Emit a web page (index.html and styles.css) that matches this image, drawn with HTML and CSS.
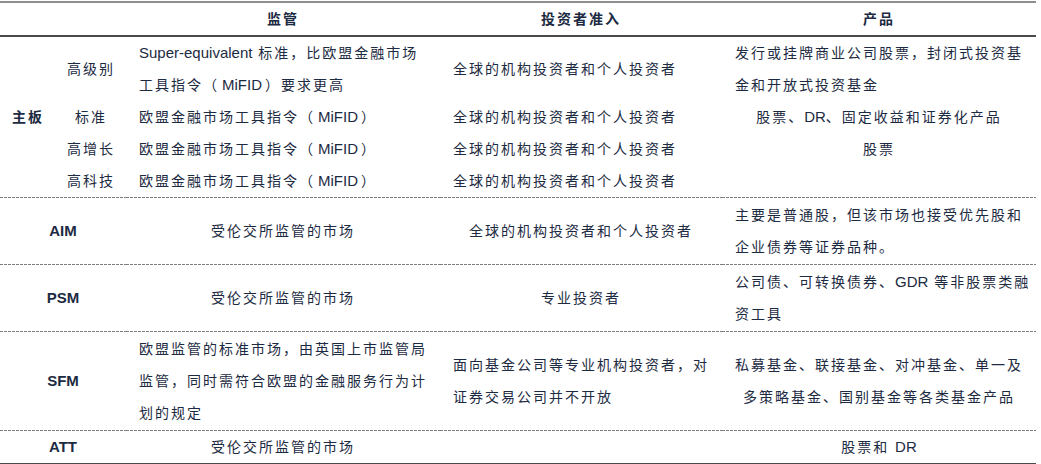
FILE: index.html
```html
<!DOCTYPE html>
<html lang="zh-CN">
<head>
<meta charset="utf-8">
<link rel="stylesheet" href="styles.css">
</head>
<body>
<table class="tbl">
  <colgroup>
    <col class="c1"><col class="c2"><col class="c3"><col class="c4"><col class="c5">
  </colgroup>
  <thead>
    <tr>
      <th colspan="2"></th>
      <th>监管</th>
      <th>投资者准入</th>
      <th>产品</th>
    </tr>
  </thead>
  <tbody>
    <tr class="sub">
      <td rowspan="4" class="group bold">主板</td>
      <td class="ctr">高级别</td>
      <td><span class="lat">Super-equivalent</span> 标准，比欧盟金融市场<br>工具指令（<span class="lat par">MiFID</span>）要求更高</td>
      <td>全球的机构投资者和个人投资者</td>
      <td>发行或挂牌商业公司股票，封闭式投资基<br>金和开放式投资基金</td>
    </tr>
    <tr class="sub">
      <td class="ctr">标准</td>
      <td>欧盟金融市场工具指令（<span class="lat par">MiFID</span>）</td>
      <td>全球的机构投资者和个人投资者</td>
      <td class="ctr">股票、<span class="lat">DR</span>、固定收益和证券化产品</td>
    </tr>
    <tr class="sub">
      <td class="ctr">高增长</td>
      <td>欧盟金融市场工具指令（<span class="lat par">MiFID</span>）</td>
      <td>全球的机构投资者和个人投资者</td>
      <td class="ctr">股票</td>
    </tr>
    <tr class="sub last">
      <td class="ctr">高科技</td>
      <td>欧盟金融市场工具指令（<span class="lat par">MiFID</span>）</td>
      <td>全球的机构投资者和个人投资者</td>
      <td></td>
    </tr>
    <tr class="grp">
      <td colspan="2" class="ctr lat bold">AIM</td>
      <td class="ctr">受伦交所监管的市场</td>
      <td class="ctr">全球的机构投资者和个人投资者</td>
      <td>主要是普通股，但该市场也接受优先股和<br>企业债券等证券品种。</td>
    </tr>
    <tr class="grp">
      <td colspan="2" class="ctr lat bold">PSM</td>
      <td class="ctr">受伦交所监管的市场</td>
      <td class="ctr">专业投资者</td>
      <td>公司债、可转换债券、<span class="lat">GDR</span> 等非股票类融<br>资工具</td>
    </tr>
    <tr class="grp">
      <td colspan="2" class="ctr lat bold">SFM</td>
      <td>欧盟监管的标准市场，由英国上市监管局<br>监管，同时需符合欧盟的金融服务行为计<br>划的规定</td>
      <td>面向基金公司等专业机构投资者，对<br>证券交易公司并不开放</td>
      <td class="ctr">私募基金、联接基金、对冲基金、单一及<br>多策略基金、国别基金等各类基金产品</td>
    </tr>
    <tr class="grp end">
      <td colspan="2" class="ctr lat bold">ATT</td>
      <td class="ctr">受伦交所监管的市场</td>
      <td></td>
      <td class="ctr">股票和 <span class="lat">DR</span></td>
    </tr>
  </tbody>
</table>
</body>
</html>
```

FILE: styles.css
```css
html, body {
  margin: 0;
  padding: 0;
  background: #ffffff;
}
body {
  font-family: "Liberation Sans", "Noto Sans CJK SC", sans-serif;
  color: #1c2a42;
}
.tbl {
  margin-top: 1px;
  width: 1036px;
  table-layout: fixed;
  border-collapse: collapse;
  border-top: 2px solid #8f8f8f;
  border-bottom: 2px solid #4a4a4a;
  font-size: 14px;
  letter-spacing: 2px;
}
.c1 { width: 56px; }
.c2 { width: 70px; }
.c3 { width: 314px; }
.c4 { width: 282px; }
.c5 { width: 314px; }
th {
  height: 32px;
  padding: 0;
  font-weight: 700;
  text-align: center;
  vertical-align: middle;
  border-bottom: 2px solid #4a4a4a;
  line-height: 20px;
}
td {
  padding: 0 12px 0 13px;
  line-height: 32px;
  vertical-align: middle;
  text-align: left;
  white-space: nowrap;
}
.sub td { padding-top: 0; padding-bottom: 0; }
.grp td {
  padding-top: 2px;
  padding-bottom: 1px;
  background-image: repeating-linear-gradient(90deg, #7d7d7d 0 3px, transparent 3px 4px);
  background-size: 100% 1px;
  background-position: left top;
  background-repeat: no-repeat;
}
.grp.end td { padding-top: 1px; padding-bottom: 0; }
td.group {
  padding: 0;
  text-align: center;
}
td.ctr {
  text-align: center;
  padding-left: 0;
  padding-right: 0;
}
.lat {
  letter-spacing: 0;
  font-size: 15px;
}
.par {
  margin: 0 3px;
}
.bold { font-weight: 700; }
```
